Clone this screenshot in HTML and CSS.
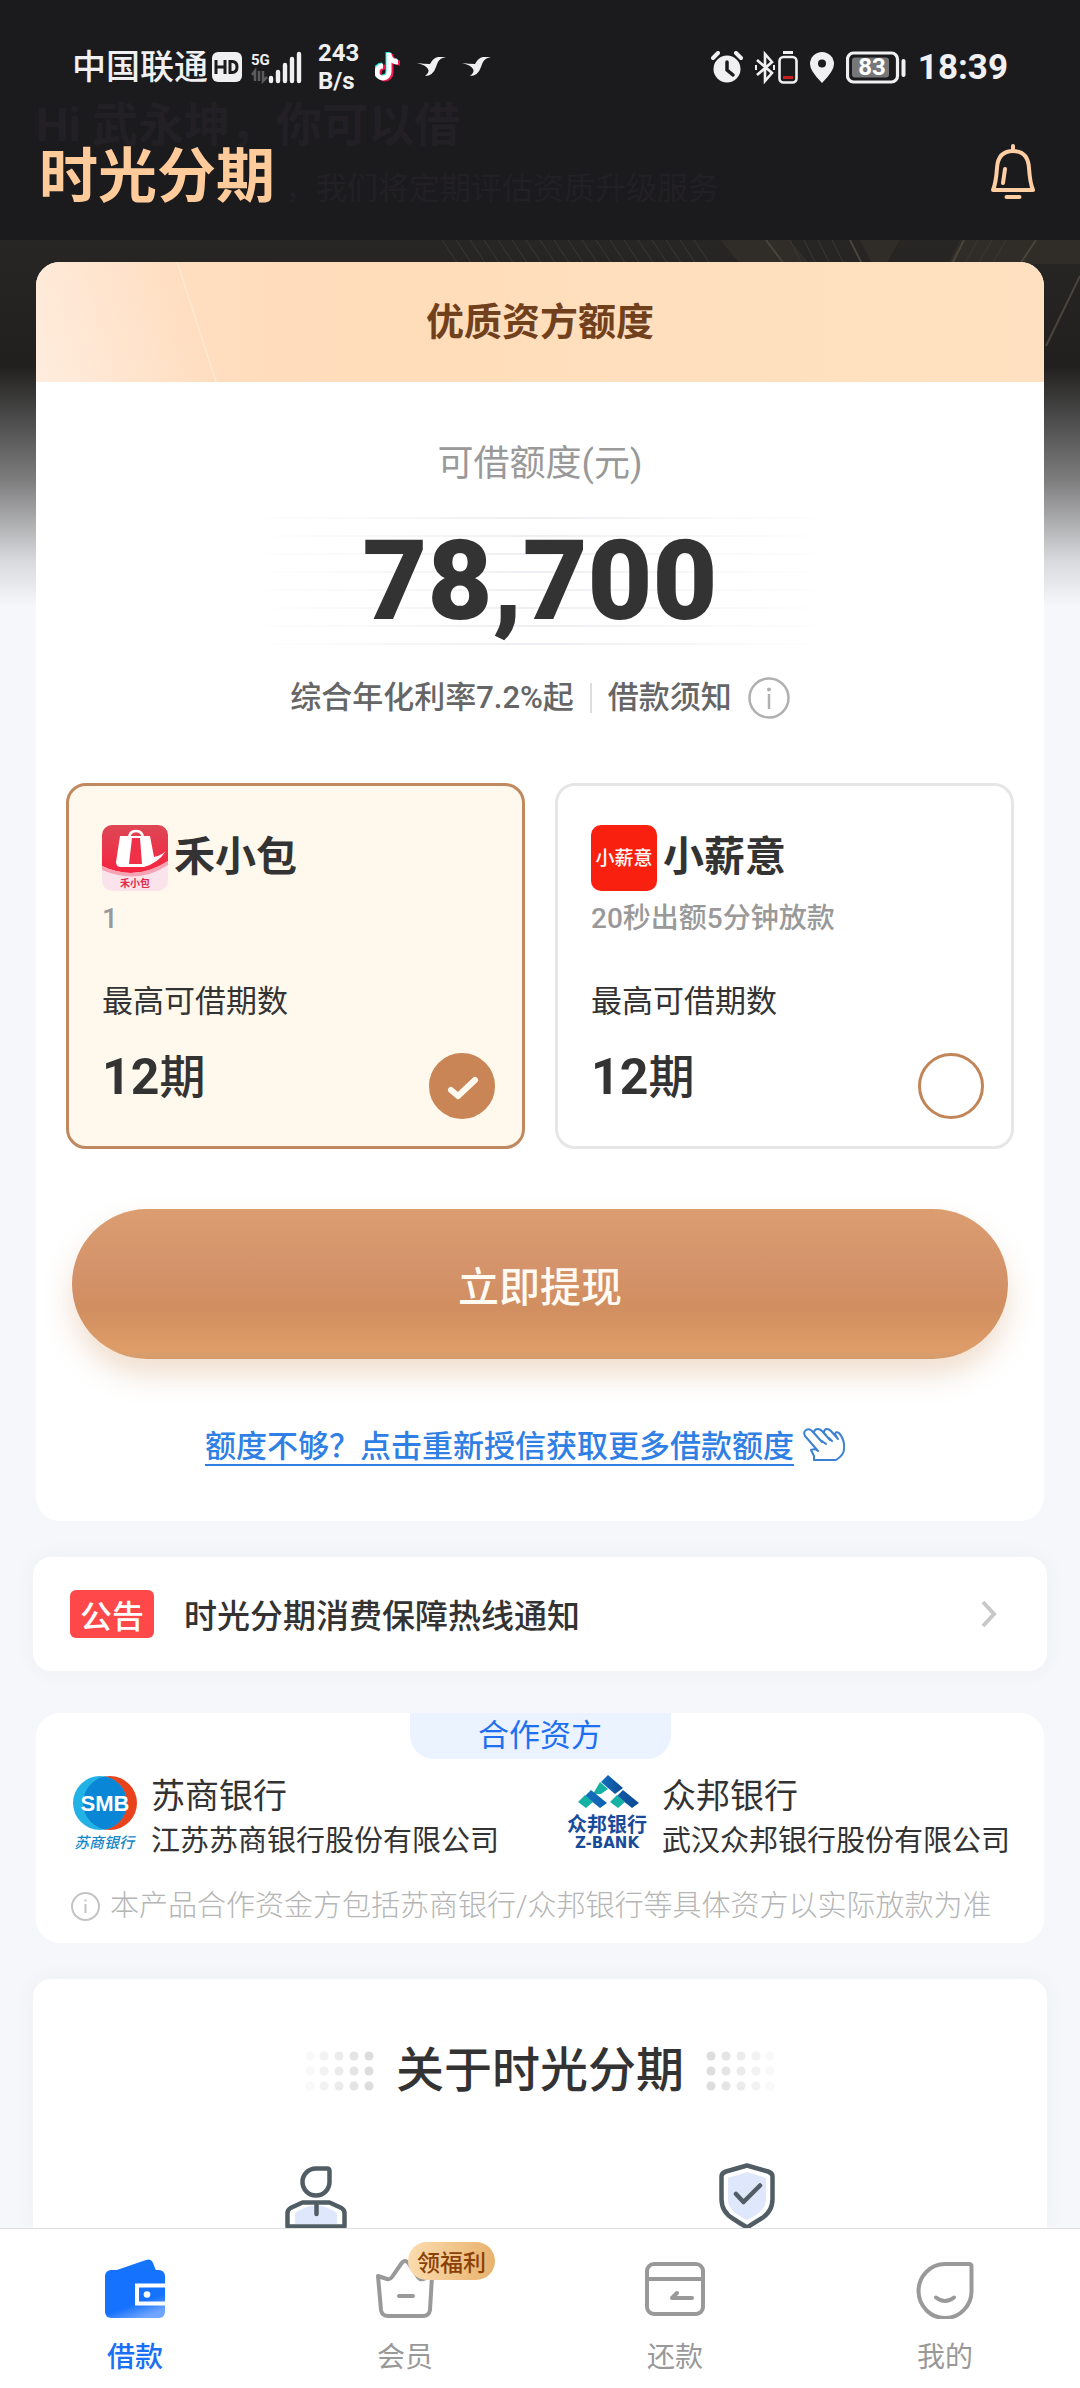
FILE: index.html
```html
<!DOCTYPE html>
<html lang="zh-CN">
<head>
<meta charset="utf-8">
<meta name="viewport" content="width=device-width, initial-scale=1">
<title>时光分期</title>
<link rel="stylesheet" href="styles.css">
</head>
<body>
<div class="app">
  <header class="top">
    <p class="greeting">Hi 武永坤，你可以借</p>
    <p class="greeting-sub">，我们将定期评估资质升级服务</p>
    <div class="status">
      <div class="status-group status-left">
        <div class="carrier">
          <span>中国联通</span>
          <svg width="30" height="30" viewBox="0 0 30 30"><rect width="30" height="30" rx="6" fill="#f0f0f2"/><path d="M4 8v14M13 8v14M4 15h9M18 9.500v11h2q5 0 5-5.500t-5-5.500z" fill="none" stroke="#1b1b1d" stroke-width="3"/></svg>
          <svg width="56" height="34" viewBox="0 0 56 34"><text x="5" y="15" class="net-label">5G</text><path d="M9 31V21l-3 4M13 21v10M17 21v10l4-4" fill="none" stroke="#5b5b5e" stroke-width="2.500"/><path d="M25 28v3M32 22v9M39 15v16M46 9v22M53 4v27" stroke="#f0f0f2" stroke-width="4.400" stroke-linecap="round"/></svg>
        </div>
        <span class="speed">243<br>B/s</span>
        <svg width="26" height="30" viewBox="0 0 26 30" fill="none" stroke-width="5"><path d="M14 1v19a6 6 0 1 1-6-6M14 3q2 7 9 7" stroke="#25e5e0" transform="translate(-1 -1)"/><path d="M14 1v19a6 6 0 1 1-6-6M14 3q2 7 9 7" stroke="#f0184f" transform="translate(2 1)"/><path d="M14 1v19a6 6 0 1 1-6-6M14 3q2 7 9 7" stroke="#fff"/></svg>
        <svg width="29" height="20" viewBox="0 0 29 20"><path d="M0 6q7 1 13 1 3-6 8-7h8q-6 1-8 5-1 2-2 5-3 9-11 9 5-4 3-7-2-4-11-6z" fill="#f0f0f2"/></svg>
        <svg width="29" height="20" viewBox="0 0 29 20"><path d="M0 6q7 1 13 1 3-6 8-7h8q-6 1-8 5-1 2-2 5-3 9-11 9 5-4 3-7-2-4-11-6z" fill="#f0f0f2"/></svg>
      </div>
      <div class="status-group status-right">
        <svg width="32" height="32" viewBox="0 0 32 32"><circle cx="16" cy="18" r="13.500" fill="#f0f0f2"/><path d="M2 7l5-5M30 7l-5-5" stroke="#f0f0f2" stroke-width="4" stroke-linecap="round"/><path d="M16 11v8l6 5" fill="none" stroke="#1b1b1d" stroke-width="3.500" stroke-linecap="round"/></svg>
        <svg width="43" height="33" viewBox="0 0 43 33" fill="none" stroke="#f0f0f2" stroke-width="2.600"><path d="M2 9l15 13-7 8V3l7 8L2 24"/><path d="M1 14v5M19 14v5" stroke-width="2"/><rect x="24.500" y="6" width="17" height="25.500" rx="4"/><path d="M28 1.500h10" stroke-width="3"/><path d="M28 26.500h10" stroke="#c81f1f" stroke-width="3"/></svg>
        <svg width="24" height="31" viewBox="0 0 24 31"><path d="M12 0a12 12 0 0 1 12 12q0 7-12 19Q0 19 0 12A12 12 0 0 1 12 0z" fill="#f0f0f2"/><circle cx="12" cy="11.500" r="4" fill="#1b1b1d"/></svg>
        <svg width="60" height="33" viewBox="0 0 60 33"><rect x="1.500" y="2" width="50" height="29" rx="6" fill="none" stroke="#f0f0f2" stroke-width="3.200"/><rect x="6" y="6.500" width="37" height="20" rx="3" fill="#77777a"/><text x="26" y="24" text-anchor="middle" class="battery-label">83</text><path d="M57.500 10v14" stroke="#f0f0f2" stroke-width="4" stroke-linecap="round"/></svg>
        <time class="clock">18:39</time>
      </div>
    </div>
    <div class="nav">
      <h1 class="brand">时光分期</h1>
      <button class="bell" type="button" aria-label="消息">
        <svg width="46" height="56" viewBox="0 0 46 56" fill="none" stroke="#ffcfa3" stroke-width="4" stroke-linecap="round" stroke-linejoin="round"><path d="M23 2v4M3 46q3-7 4-22Q8 7 23 7t16 17q1 15 4 22z"/><path d="M15 25l-2 14M16.500 53h13"/></svg>
      </button>
    </div>
  </header>

  <main class="content">
    <svg class="hero-art" viewBox="0 0 680 140" width="680" height="140" fill="none" aria-hidden="true">
      <path d="M320 0h70l20 24h-70zM460 0h40l-14 24h-14zM560 0h120v24H548z" fill="#302c27"/>
      <path d="M42 0l16 24M56 0l16 24M70 0l16 24M84 0l16 24M98 0l16 24M112 0l16 24M126 0l16 24M140 0l16 24M154 0l16 24M168 0l16 24M182 0l16 24M196 0l16 24M210 0l16 24M224 0l16 24M238 0l16 24M252 0l16 24M266 0l16 24M280 0l16 24M294 0l16 24M390 0l12 24M404 0l12 24M418 0l12 24M432 0l12 24M564 0l-14 24M578 0l-14 24M592 0l-14 24M606 0l-14 24" stroke="#3b3833"/>
      <path d="M366 0l18 24M450 0l12 24M564 0l-12 24M636 0l-16 24M680 36l-34 70" stroke="#4a443b" stroke-width="2"/>
    </svg>

    <section class="loan-card">
      <h2 class="loan-title">优质资方额度</h2>
      <div class="loan-body">
        <p class="loan-label">可借额度(元)</p>
        <p class="loan-amount">78,700</p>
        <div class="loan-rate">
          <span>综合年化利率7.2%起</span>
          <i class="divider"></i>
          <span>借款须知</span>
          <svg width="42" height="42" viewBox="0 0 42 42" fill="none" stroke="#b0b0b0" stroke-width="2.500"><circle cx="21" cy="21" r="19.500"/><path d="M21 17v15"/><circle cx="21" cy="12.500" r="1" stroke-width="2"/></svg>
        </div>

        <div class="options">
          <label class="option">
            <span class="option-head">
              <svg width="66" height="66" viewBox="0 0 66 66"><defs><clipPath id="bag"><rect width="66" height="66" rx="10"/></clipPath><linearGradient id="bagRed" x1="0" y1="0" x2="0" y2="1"><stop offset="0" stop-color="#de4755"/><stop offset="1" stop-color="#f52440"/></linearGradient></defs><g clip-path="url(#bag)"><rect width="66" height="66" fill="#fbe3ec"/><path d="M0 0h66v36q-32 21-66 5z" fill="url(#bagRed)"/><path d="M0 41q34 16 66-5v4q-30 20-66 5z" fill="#f6a3b3"/><path d="M18 11h30l4 21q8-2 12-6-8 12-22 16H19q-5 0-5-5z" fill="#fff"/><path d="M30 13h8l2 26H27z" fill="#f03048"/><path d="M27 14q0-8 7-8t7 8" fill="none" stroke="#fff" stroke-width="2.500"/><text x="33" y="62" text-anchor="middle" class="bag-text">禾小包</text></g></svg>
              <span class="option-name">禾小包</span>
            </span>
            <span class="option-sub">1</span>
            <span class="option-caption">最高可借期数</span>
            <span class="option-foot">
              <span class="term"><b>12</b>期</span>
              <input class="pick" type="radio" name="product" checked>
            </span>
          </label>
          <label class="option">
            <span class="option-head">
              <svg width="66" height="66" viewBox="0 0 66 66"><rect width="66" height="66" rx="10" fill="#fa200f"/><text x="33" y="40" text-anchor="middle" class="salary-text">小薪意</text></svg>
              <span class="option-name">小薪意</span>
            </span>
            <span class="option-sub">20秒出额5分钟放款</span>
            <span class="option-caption">最高可借期数</span>
            <span class="option-foot">
              <span class="term"><b>12</b>期</span>
              <input class="pick" type="radio" name="product">
            </span>
          </label>
        </div>

        <button class="withdraw" type="button">立即提现</button>
        <div class="more">
          <a href="#more">额度不够？点击重新授信获取更多借款额度</a>
          <svg width="42" height="34" viewBox="0 0 42 34" fill="none" stroke="#3c82d2" stroke-width="2" stroke-linejoin="round" stroke-linecap="round"><path d="M11 32V28l-3-6q4-2 7 1L2 8Q0 4 3 2q3-2 6 1l10 11L11 5q0-4 4-4 2 0 4 2l8 9-6-7q0-4 3-4 2 0 4 2l7 8-3-5q1-3 4-1 6 7 5 16 0 6-8 11H13zM23 16l-4-3M29 13l-3-3"/></svg>
        </div>
      </div>
    </section>

    <a class="notice" href="#notice">
      <span class="tag">公告</span>
      <span class="notice-text">时光分期消费保障热线通知</span>
      <svg width="16" height="28" viewBox="0 0 16 28" fill="none" stroke="#c8c8c8" stroke-width="4"><path d="M2 2l11 12L2 26"/></svg>
    </a>

    <section class="partners">
      <h2 class="partners-title">合作资方</h2>
      <ul class="banks">
        <li class="bank">
          <svg width="66" height="78" viewBox="0 0 66 78"><defs><clipPath id="smb"><circle cx="28" cy="30" r="27"/></clipPath></defs><circle cx="38" cy="30" r="27" fill="#e8431c"/><circle cx="28" cy="30" r="27" fill="#23b2e6"/><circle cx="38" cy="30" r="27" fill="#0a86d6" clip-path="url(#smb)"/><text x="33" y="38" text-anchor="middle" class="smb-text">SMB</text><text x="32" y="75" text-anchor="middle" class="smb-name">苏商银行</text></svg>
          <div>
            <h3>苏商银行</h3>
            <p>江苏苏商银行股份有限公司</p>
          </div>
        </li>
        <li class="bank">
          <svg width="83" height="78" viewBox="0 0 83 78"><defs><linearGradient id="zb"><stop offset="0" stop-color="#1470c0"/><stop offset="1" stop-color="#0d4a94"/></linearGradient></defs><path d="M42 2l15 13-8 6-14-12z" fill="url(#zb)"/><path d="M34 9l8 7-7 5h-8z" fill="#16b0a4"/><path d="M25 17l16 13-7 5-15-12zM57 17l16 13-7 5-15-12z" fill="url(#zb)"/><path d="M19 22l8 7-7 6-8-6zM51 22l8 7-7 6-8-6z" fill="#16b0a4"/><text x="41" y="59" text-anchor="middle" class="zb-name">众邦银行</text><text x="41" y="75" text-anchor="middle" class="zb-latin">Z-BANK</text></svg>
          <div>
            <h3>众邦银行</h3>
            <p>武汉众邦银行股份有限公司</p>
          </div>
        </li>
      </ul>
      <p class="disclaimer">
        <svg width="29" height="29" viewBox="0 0 29 29" fill="none" stroke="#c4c4c4" stroke-width="2"><circle cx="14.500" cy="14.500" r="13.500"/><path d="M14.500 12v9M14.500 7.500v2"/></svg>
        <span>本产品合作资金方包括苏商银行/众邦银行等具体资方以实际放款为准</span>
      </p>
    </section>

    <section class="about">
      <div class="about-title">
        <svg width="70" height="40" viewBox="0 0 70 40"><g id="dots" fill="#cfcfcf"><g opacity=".1"><circle cx="6" cy="5" r="4.500"/><circle cx="6" cy="20" r="4.500"/><circle cx="6" cy="35" r="4.500"/></g><g opacity=".25"><circle cx="20" cy="5" r="4.500"/><circle cx="20" cy="20" r="4.500"/><circle cx="20" cy="35" r="4.500"/></g><g opacity=".4"><circle cx="35" cy="5" r="4.500"/><circle cx="35" cy="20" r="4.500"/><circle cx="35" cy="35" r="4.500"/></g><g opacity=".55"><circle cx="50" cy="5" r="4.500"/><circle cx="50" cy="20" r="4.500"/><circle cx="50" cy="35" r="4.500"/></g><g opacity=".7"><circle cx="65" cy="5" r="4.500"/><circle cx="65" cy="20" r="4.500"/><circle cx="65" cy="35" r="4.500"/></g></g></svg>
        <h2>关于时光分期</h2>
        <svg width="70" height="40" viewBox="0 0 70 40"><use href="#dots" transform="translate(70 0) scale(-1 1)"/></svg>
      </div>
      <div class="features">
        <svg width="62" height="66" viewBox="0 0 62 66" fill="none" stroke="#515d64" stroke-width="4.500" stroke-linejoin="round" stroke-linecap="round"><path d="M10 61V50q21-15 42 0v11z" fill="#dfe7fc" stroke="none"/><path d="M31 5.500h11q2.500 0 2.500 2.500v11A13.500 13.500 0 1 1 31 5.500zM2.500 63.500V50q0-3 3-5l12-5.500h27l12 5.500q3 2 3 5v13.500zM31.500 40v11"/></svg>
        <svg width="56" height="66" viewBox="0 0 56 66" fill="none" stroke="#515d64" stroke-width="4.500" stroke-linejoin="round" stroke-linecap="round"><path d="M28 9l19 6v22q0 11-19 20Q9 48 9 37V15z" fill="#dfe7fc" stroke="none"/><path d="M28 2.500l21 6q4.500 1.500 4.500 5V36q0 13-12 20-9 5.500-13.500 8.500Q23 61.500 14.500 56 2.500 49 2.500 36V13.500q0-3.500 4.500-5zM17 31l7.500 8L41 22.500"/></svg>
      </div>
    </section>
  </main>

  <nav class="tabs">
    <a class="tab tab-on" href="#loan">
      <svg width="60" height="60" viewBox="0 0 60 60"><defs><linearGradient id="wal" x1=".3" y1=".3" x2=".6" y2="1"><stop offset="0" stop-color="#1472ff"/><stop offset=".6" stop-color="#1472ff"/><stop offset="1" stop-color="#6fa4ff"/></linearGradient></defs><path d="M6 13L41 1q5-2 7 3l4 10z" fill="#1673fc"/><rect y="11" width="60" height="48" rx="6" fill="url(#wal)"/><path d="M60 26.500H32v18h28" fill="none" stroke="#fff" stroke-width="4"/><circle cx="42" cy="35.500" r="3.300" fill="#fff"/></svg>
      <span>借款</span>
    </a>
    <a class="tab" href="#member">
      <svg width="60" height="60" viewBox="0 0 60 60" fill="none" stroke="#999" stroke-width="4" stroke-linejoin="round" stroke-linecap="round"><path d="M3 17l9 3q3 1 5-2l9-13q4-6 8 0l9 13q2 3 5 2l9-3-2 34q-1 6-7 6H13q-6 0-7-6zM24 37h14"/></svg>
      <span>会员</span>
      <em class="perk">领福利</em>
    </a>
    <a class="tab" href="#repay">
      <svg width="60" height="60" viewBox="0 0 60 60" fill="none" stroke="#999" stroke-width="4" stroke-linejoin="round" stroke-linecap="round"><rect x="2" y="5" width="56" height="50" rx="7"/><path d="M2 20h56M47 39H27l5-5"/></svg>
      <span>还款</span>
    </a>
    <a class="tab" href="#me">
      <svg width="60" height="60" viewBox="0 0 60 60" fill="none" stroke="#999" stroke-width="4" stroke-linejoin="round" stroke-linecap="round"><path d="M30 5h24q2.500 0 2.500 2.500V31A26.500 27 0 1 1 30 5zM21 38.500q9 7 18 0"/></svg>
      <span>我的</span>
    </a>
  </nav>
</div>
</body>
</html>
```
FILE: styles.css
```css
* { box-sizing: border-box; }

body, h1, h2, h3, p, ul { margin: 0; padding: 0; font-weight: 400; }

body {
  font-family: Roboto, "Noto Sans CJK SC", sans-serif;
  color: #333;
  background: #f6f7fa;
}

svg { display: block; flex: none; }
a { text-decoration: none; color: inherit; }
ul { list-style: none; }

.app {
  display: flex;
  flex-direction: column;
  height: 100vh;
}

/* top bar */
.top {
  position: relative;
  flex: none;
  background: #1b1b1d;
  padding-bottom: 30px;
}

.greeting, .greeting-sub {
  position: absolute;
  color: #222024;
  white-space: nowrap;
}
.greeting { left: 36px; top: 102px; font-size: 46px; line-height: 46px; font-weight: 700; }
.greeting-sub { left: 285px; top: 168px; font-size: 31px; line-height: 42px; }

.status {
  position: relative;
  display: flex;
  justify-content: space-between;
  align-items: center;
  height: 134px;
  padding: 0 72px;
  color: #f0f0f2;
}
.status-group { display: flex; align-items: center; }
.status-left { gap: 16px; }
.status-right { gap: 12px; }
.carrier { display: flex; align-items: center; gap: 4px; font-size: 34px; line-height: 40px; font-weight: 500; }
.speed { font-size: 24px; line-height: 28px; font-weight: 700; }
.clock { font-size: 35px; font-weight: 700; }
.net-label { font: 700 15px Roboto, sans-serif; fill: #f0f0f2; }
.battery-label { font: 700 24px Roboto, sans-serif; fill: #fff; }

.nav {
  position: relative;
  display: flex;
  justify-content: space-between;
  align-items: center;
  height: 76px;
  padding: 0 44px 0 39px;
}
.brand { font: 700 59px/60px "Noto Sans CJK SC", sans-serif; color: #ffcb9a; }
.bell { border: 0; padding: 0; background: none; }

/* scrolling content */
.content {
  position: relative;
  flex: 1;
  min-height: 0;
  display: flex;
  flex-direction: column;
  overflow-y: auto;
  scrollbar-width: none;
  padding-top: 22px;
  background: linear-gradient(#272624, #21201f 126px, #7d7d7e 240px, #d8d9dc 320px, #f6f7fa 366px);
}
.content > * { flex: none; }
.hero-art { position: absolute; top: 0; right: 0; }

.loan-card {
  position: relative;
  margin: 0 36px;
  border-radius: 24px;
  overflow: hidden;
  background: #fff;
}
.loan-title {
  height: 120px;
  font-size: 38px;
  line-height: 120px;
  font-weight: 700;
  text-align: center;
  color: #71401c;
  background:
    linear-gradient(72deg, rgba(255, 240, 228, .8), rgba(255, 222, 193, .1) 170px, rgba(255, 240, 220, .7) 171px, rgba(255, 240, 220, 0) 173px),
    linear-gradient(90deg, #ffdfc5, #ffdcba 300px, #ffe0be 700px, #ffe0c0);
}
.loan-body {
  display: flex;
  flex-direction: column;
  align-items: center;
  padding: 58px 30px 55px;
}
.loan-label { font-size: 36px; line-height: 48px; color: #999; }
.loan-amount {
  width: 580px;
  margin-top: 29px;
  font-size: 112px;
  line-height: 128px;
  font-weight: 900;
  text-align: center;
  background:
    linear-gradient(90deg, #fff, rgba(255, 255, 255, 0) 50%, #fff),
    repeating-linear-gradient(#efeff3 0 2px, #fff 2px 18px);
}
.loan-rate {
  display: flex;
  align-items: center;
  gap: 16px;
  margin-top: 32px;
  font-size: 31px;
  line-height: 42px;
  font-weight: 500;
  color: #666;
}
.divider { width: 2px; height: 30px; background: #ddd; }

.options {
  align-self: stretch;
  display: grid;
  grid-template-columns: 1fr 1fr;
  gap: 30px;
  margin-top: 64px;
}
.option {
  display: flex;
  flex-direction: column;
  padding: 39px 27px 27px 33px;
  border: 3px solid #e6e6e6;
  border-radius: 20px;
}
.option:has(:checked) { border-color: #c0895f; background: #fff9ed; }
.option-head { display: flex; gap: 6px; }
.option-name { font: 700 41px/56px "Noto Sans CJK SC", sans-serif; }
.option-sub { margin-top: 9px; font-size: 28px; line-height: 38px; font-weight: 500; color: #999; }
.option-caption { margin-top: 43px; font-size: 31px; line-height: 42px; }
.option-foot { display: flex; justify-content: space-between; margin-top: 30px; }
.term { display: flex; align-items: center; height: 48px; font-size: 46px; line-height: 48px; font-weight: 500; }
.term b { font-size: 50px; font-weight: 700; }
.bag-text { font: 700 10px "Noto Sans CJK SC", sans-serif; fill: #e0294a; }
.salary-text { font: 500 19px "Noto Sans CJK SC", sans-serif; fill: #fff; }

.pick {
  appearance: none;
  width: 66px;
  height: 66px;
  margin: 0;
  border: 3px solid #c18558;
  border-radius: 50%;
}
.pick:checked {
  border-color: #c98555;
  background: #c98555 url("data:image/svg+xml,%3Csvg xmlns='http://www.w3.org/2000/svg' viewBox='0 0 60 60'%3E%3Cpath d='M19 34l7 6 17-16' fill='none' stroke='%23fffaf0' stroke-width='6' stroke-linecap='round' stroke-linejoin='round'/%3E%3C/svg%3E");
}

.withdraw {
  align-self: stretch;
  height: 150px;
  margin: 60px 6px 0;
  border: 0;
  border-radius: 75px;
  font: 500 41px/60px "Noto Sans CJK SC", sans-serif;
  color: #fffaf2;
  background: linear-gradient(#dc9d71, #d4936a 40%, #d18e60 66%, #de9d68 94%, #d59c6c);
  box-shadow: 0 16px 28px rgba(205, 150, 95, .3);
}
.more { display: flex; align-items: center; gap: 9px; margin-top: 65px; padding-right: 30px; }
.more a {
  font: 500 31px/40px "Noto Sans CJK SC", sans-serif;
  color: #2f7fe4;
  border-bottom: 2px solid #2f7fe4;
}

.notice {
  display: flex;
  align-items: center;
  height: 114px;
  margin: 36px 33px 0;
  padding: 0 50px 0 37px;
  border-radius: 18px;
  font-family: "Noto Sans CJK SC", sans-serif;
  background: #fff;
  box-shadow: 0 0 24px rgba(40, 50, 80, .04);
}
.tag {
  width: 84px;
  border-radius: 6px;
  font-size: 32px;
  line-height: 48px;
  font-weight: 500;
  text-align: center;
  color: #fff;
  background: #ff4849;
}
.notice-text { flex: 1; margin-left: 30px; font-size: 33px; line-height: 48px; font-weight: 500; }

.partners { margin: 42px 36px 0; padding-bottom: 16px; border-radius: 24px; background: #fff; }
.partners-title {
  width: 261px;
  margin: 0 auto;
  border-radius: 0 0 24px 24px;
  font-size: 31px;
  line-height: 46px;
  text-align: center;
  color: #1f70f0;
  background: #eaf3ff;
}
.banks { display: flex; justify-content: space-between; margin-top: 14px; padding: 0 34px 0 36px; }
.bank { display: flex; gap: 13px; }
.bank h3 { font-size: 34px; line-height: 46px; }
.bank p { font-size: 29px; line-height: 44px; }
.smb-text { font: 700 22px "Liberation Sans", sans-serif; fill: #fff; }
.smb-name { font: italic 500 15px "Noto Sans CJK SC", sans-serif; fill: #1688ca; }
.zb-name { font: 700 20px "Noto Sans CJK SC", sans-serif; fill: #184b9a; }
.zb-latin { font: 700 15px "DejaVu Sans", sans-serif; fill: #184b9a; }
.disclaimer {
  display: flex;
  align-items: center;
  gap: 10px;
  margin: 22px 0 0 35px;
  font-size: 29px;
  line-height: 42px;
  font-weight: 300;
  color: #b5b5b5;
}

.content > .about {
  flex: 1 0 auto;
  margin: 36px 33px 0;
  padding-top: 62px;
  border-radius: 18px 18px 0 0;
  background: #fff;
  box-shadow: 0 0 24px rgba(40, 50, 80, .04);
}
.about-title { display: flex; justify-content: center; align-items: center; gap: 22px; }
.about-title h2 { font-size: 48px; line-height: 60px; font-weight: 500; }
.features {
  display: grid;
  grid-template-columns: 1fr 1fr;
  justify-items: center;
  margin-top: 62px;
  padding: 0 85px 0 68px;
}

/* bottom tabs */
.tabs {
  flex: none;
  display: grid;
  grid-template-columns: repeat(4, 1fr);
  height: 160px;
  border-top: 1px solid #dedede;
  background: #fff;
}
.tab {
  position: relative;
  display: flex;
  flex-direction: column;
  align-items: center;
  gap: 18px;
  padding-top: 30px;
  font-family: "Noto Sans CJK SC", sans-serif;
  font-size: 28px;
  line-height: 36px;
  color: #999;
}
.tab-on { color: #1a70f5; font-weight: 500; }
.perk {
  position: absolute;
  top: 13px;
  left: 50%;
  margin-left: 3px;
  padding: 0 9px;
  border-radius: 19px;
  font-size: 23px;
  line-height: 38px;
  font-style: normal;
  font-weight: 500;
  color: #8a4107;
  background: linear-gradient(90deg, #fbdcae, #e8b26d);
}
```
